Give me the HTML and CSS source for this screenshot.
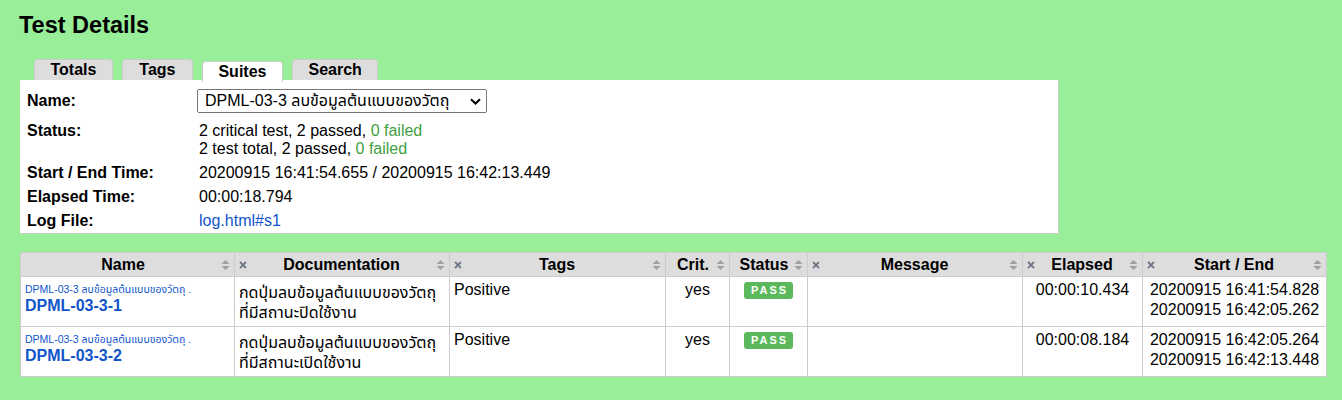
FILE: index.html
```html
<!DOCTYPE html>
<html lang="en">
<head>
<meta charset="utf-8">
<title>Report</title>
<link rel="stylesheet" href="styles.css">
</head>
<body>
<h2 class="title">Test Details</h2>
<div class="tabs">
  <div class="tab">Totals</div>
  <div class="tab">Tags</div>
  <div class="tab selected">Suites</div>
  <div class="tab">Search</div>
</div>
<div class="details">
  <div class="label first">Name:</div>
  <div class="value first">
    <div class="select"><span class="select-text">DPML-03-3 ลบข้อมูลต้นแบบของวัตถุ</span>
      <svg class="chev" width="11" height="7" viewBox="0 0 11 7"><path d="M1 1.2 L5.5 5.5 L10 1.2" fill="none" stroke="#000" stroke-width="2"/></svg>
    </div>
  </div>
  <div class="label">Status:</div>
  <div class="value">2 critical test, 2 passed, <span class="pass">0 failed</span><br>2 test total, 2 passed, <span class="pass">0 failed</span></div>
  <div class="label">Start / End Time:</div>
  <div class="value">20200915 16:41:54.655 / 20200915 16:42:13.449</div>
  <div class="label">Elapsed Time:</div>
  <div class="value">00:00:18.794</div>
  <div class="label">Log File:</div>
  <div class="value"><a class="link" href="#">log.html#s1</a></div>
</div>

<table class="tests">
  <colgroup>
    <col class="c-name"><col class="c-doc"><col class="c-tags"><col class="c-crit"><col class="c-status"><col class="c-msg"><col class="c-elapsed"><col class="c-times">
  </colgroup>
  <thead>
    <tr>
      <th><div class="hd"><span class="ht">Name</span><svg class="sort" width="9" height="12" viewBox="0 0 9 12"><path d="M0.5 5 L4.5 1 L8.5 5Z M0.5 7 L4.5 11 L8.5 7Z" fill="#a0a0a0"/></svg></div></th>
      <th><div class="hd"><svg class="hide" width="8" height="8" viewBox="0 0 8 8"><path d="M1 1L7 7M7 1L1 7" stroke="#707888" stroke-width="1.8"/></svg><span class="ht">Documentation</span><svg class="sort" width="9" height="12" viewBox="0 0 9 12"><path d="M0.5 5 L4.5 1 L8.5 5Z M0.5 7 L4.5 11 L8.5 7Z" fill="#a0a0a0"/></svg></div></th>
      <th><div class="hd"><svg class="hide" width="8" height="8" viewBox="0 0 8 8"><path d="M1 1L7 7M7 1L1 7" stroke="#707888" stroke-width="1.8"/></svg><span class="ht">Tags</span><svg class="sort" width="9" height="12" viewBox="0 0 9 12"><path d="M0.5 5 L4.5 1 L8.5 5Z M0.5 7 L4.5 11 L8.5 7Z" fill="#a0a0a0"/></svg></div></th>
      <th><div class="hd"><span class="ht">Crit.</span><svg class="sort" width="9" height="12" viewBox="0 0 9 12"><path d="M0.5 5 L4.5 1 L8.5 5Z M0.5 7 L4.5 11 L8.5 7Z" fill="#a0a0a0"/></svg></div></th>
      <th><div class="hd"><span class="ht">Status</span><svg class="sort" width="9" height="12" viewBox="0 0 9 12"><path d="M0.5 5 L4.5 1 L8.5 5Z M0.5 7 L4.5 11 L8.5 7Z" fill="#a0a0a0"/></svg></div></th>
      <th><div class="hd"><svg class="hide" width="8" height="8" viewBox="0 0 8 8"><path d="M1 1L7 7M7 1L1 7" stroke="#707888" stroke-width="1.8"/></svg><span class="ht">Message</span><svg class="sort" width="9" height="12" viewBox="0 0 9 12"><path d="M0.5 5 L4.5 1 L8.5 5Z M0.5 7 L4.5 11 L8.5 7Z" fill="#a0a0a0"/></svg></div></th>
      <th><div class="hd"><svg class="hide" width="8" height="8" viewBox="0 0 8 8"><path d="M1 1L7 7M7 1L1 7" stroke="#707888" stroke-width="1.8"/></svg><span class="ht">Elapsed</span><svg class="sort" width="9" height="12" viewBox="0 0 9 12"><path d="M0.5 5 L4.5 1 L8.5 5Z M0.5 7 L4.5 11 L8.5 7Z" fill="#a0a0a0"/></svg></div></th>
      <th><div class="hd"><svg class="hide" width="8" height="8" viewBox="0 0 8 8"><path d="M1 1L7 7M7 1L1 7" stroke="#707888" stroke-width="1.8"/></svg><span class="ht">Start / End</span><svg class="sort" width="9" height="12" viewBox="0 0 9 12"><path d="M0.5 5 L4.5 1 L8.5 5Z M0.5 7 L4.5 11 L8.5 7Z" fill="#a0a0a0"/></svg></div></th>
    </tr>
  </thead>
  <tbody>
    <tr>
      <td class="name"><div class="parent">DPML-03-3 ลบข้อมูลต้นแบบของวัตถุ .</div><a class="tname" href="#">DPML-03-3-1</a></td>
      <td class="doc">กดปุ่มลบข้อมูลต้นแบบของวัตถุ ที่มีสถานะปิดใช้งาน</td>
      <td>Positive</td>
      <td class="center">yes</td>
      <td class="center"><span class="badge">PASS</span></td>
      <td></td>
      <td class="center">00:00:10.434</td>
      <td class="center">20200915 16:41:54.828<br>20200915 16:42:05.262</td>
    </tr>
    <tr>
      <td class="name"><div class="parent">DPML-03-3 ลบข้อมูลต้นแบบของวัตถุ .</div><a class="tname" href="#">DPML-03-3-2</a></td>
      <td class="doc">กดปุ่มลบข้อมูลต้นแบบของวัตถุ ที่มีสถานะเปิดใช้งาน</td>
      <td>Positive</td>
      <td class="center">yes</td>
      <td class="center"><span class="badge">PASS</span></td>
      <td></td>
      <td class="center">00:00:08.184</td>
      <td class="center">20200915 16:42:05.264<br>20200915 16:42:13.448</td>
    </tr>
  </tbody>
</table>
</body>
</html>
```

FILE: styles.css
```css
html, body {
  margin: 0;
  background: #99ee99;
}
body {
  padding: 0 0 0 20px;
  font-family: "Liberation Sans", Arial, "Noto Sans Thai", "Noto Sans", sans-serif;
  font-size: 16px;
  color: #000;
}
.title {
  margin: 11px 0 0 -1px;
  font-size: 23.5px;
  line-height: 28px;
  font-weight: bold;
}
.tabs {
  display: flex;
  align-items: flex-end;
  gap: 9px;
  margin: 20px 0 0 14px;
}
.tab {
  box-sizing: border-box;
  min-width: 71px;
  text-align: center;
  background: #dddddd;
  border: 1px solid #cccccc;
  border-bottom: none;
  border-radius: 4px 4px 0 0;
  padding: 1px 15.5px 1px;
  font-size: 16px;
  font-weight: bold;
  line-height: 18px;
}
.tab.selected {
  background: #fff;
  margin-bottom: -2px;
  position: relative;
  z-index: 1;
}
.details {
  width: 1038px;
  background: #fff;
  border-right: 1px solid #cccccc;
  border-bottom: 1px solid #cccccc;
  display: grid;
  grid-template-columns: 179px 1fr;
  line-height: 18px;
}
.label {
  padding: 3px 0 3px 7px;
  font-weight: bold;
}
.value {
  padding: 3px 0;
}
.label.first, .value.first {
  padding-top: 9px;
  padding-bottom: 6px;
  display: flex;
  align-items: center;
}
.select {
  box-sizing: border-box;
  width: 290px;
  height: 24px;
  margin-left: -2px;
  border: 1px solid #767676;
  border-radius: 2px;
  display: flex;
  align-items: center;
  justify-content: space-between;
  padding: 0 5px 0 7px;
  background: #fff;
}
.chev { display: block; }
.pass { color: #3f9f3f; }
.link { color: #1155cc; text-decoration: none; }

.tests {
  margin-top: 18px;
  border-collapse: collapse;
  table-layout: fixed;
  width: 1306px;
  background: #fff;
  border: 1px solid #cccccc;
}
.c-name { width: 214px; }
.c-doc { width: 215px; }
.c-tags { width: 216px; }
.c-crit { width: 64px; }
.c-status { width: 78px; }
.c-msg { width: 215px; }
.c-elapsed { width: 120px; }
.c-times { width: 184px; }
.tests th {
  background: #dddddd;
  border: 1px solid #cccccc;
  padding: 2px 4px;
  font-size: 16px;
  line-height: 19px;
}
.hd {
  display: flex;
  align-items: center;
}
.ht { flex: 1; text-align: center; white-space: nowrap; }
.hide { flex: none; display: block; margin-left: 0; }
.sort { flex: none; display: block; }
.tests td {
  border: 1px solid #cccccc;
  padding: 3px 4px 5px;
  vertical-align: top;
  line-height: 20px;
  height: 41px;
}
.tests td.name { padding-top: 4px; padding-bottom: 4px; }
.tests td.doc { padding-top: 6px; padding-bottom: 2px; }
.tests td.center { text-align: center; }
.parent {
  font-size: 10.5px;
  line-height: 16px;
  color: #1155cc;
  white-space: nowrap;
  overflow: hidden;
}
.tname {
  display: block;
  font-weight: bold;
  color: #1155cc;
  text-decoration: none;
  line-height: 18px;
}
.badge {
  display: inline-block;
  margin-top: 2px;
  background: #5cb85c;
  color: #fff;
  font-size: 11px;
  font-weight: bold;
  letter-spacing: 2px;
  line-height: 17px;
  padding: 0 5px 0 7px;
  border-radius: 3px;
  vertical-align: top;
}
```
